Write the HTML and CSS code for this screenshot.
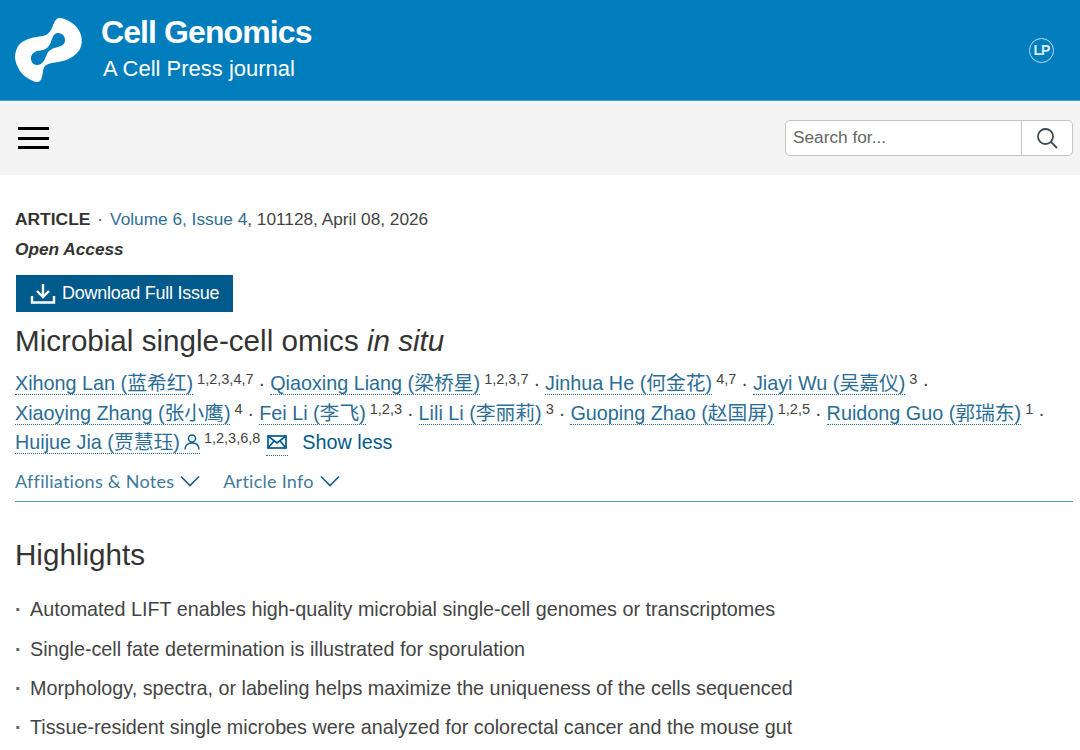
FILE: index.html
```html
<!DOCTYPE html>
<html lang="en">
<head>
<meta charset="utf-8">
<title>Microbial single-cell omics in situ</title>
<link rel="stylesheet" href="styles.css">
</head>
<body>
<header class="brand">
  <svg class="logo" viewBox="0 0 76 76" width="76" height="76" aria-hidden="true">
    <path fill="#fff" fill-rule="evenodd" d="M50 6C58 7 68 13 71 23C73 31 71 38 66 42C60 48 50 50 42 51C36 52 34 54 33 59C32.500 63 32 67 30 69C28 71 25 70 21 68C12 64 6 55 5 46C5 38 8 32 14 29C20 25 30 25 36 23C40 21 42 16 44 11C45 8 47 6 50 6ZM48 21C44 21 42 26 41 30C39 35 36 38 30 38.500C25 39 21 42 21 46C21 50 23 53 27 53C33 53 35 47 37 42C39 38 43 36 48 35C52 34 55 32 55 28C55 24 52 21 48 21Z"/>
  </svg>
  <div class="brand-text">
    <div class="brand-name">Cell Genomics</div>
    <div class="brand-sub">A Cell Press journal</div>
  </div>
  <div class="avatar">LP</div>
</header>
<nav class="toolbar">
  <button class="burger" aria-label="Menu"><span></span><span></span><span></span></button>
  <form class="search">
    <span class="search-input">Search for...</span>
    <span class="search-btn">
      <svg viewBox="0 0 24 24" width="24" height="24" fill="none" stroke="#3f4a52" stroke-width="1.800" aria-hidden="true"><circle cx="10.500" cy="10.500" r="7.500"/><path d="M16 16l6 6"/></svg>
    </span>
  </form>
</nav>
<main class="content">
  <div class="meta"><b class="kind">ARTICLE</b><span class="sep">·</span><a class="plain">Volume 6, Issue 4</a>, 101128, April 08, 2026</div>
  <div class="oa">Open Access</div>
  <a class="download">
    <svg viewBox="0 0 26 22" width="26" height="22" fill="none" stroke="#fff" stroke-width="2.400" aria-hidden="true"><path d="M13 1v12M7 8l6 6 6-6"/><path d="M2 13v6.500h22V13"/></svg>
    <span>Download Full Issue</span>
  </a>
  <h1>Microbial single-cell omics <i>in situ</i></h1>
  <div class="authors">
    <a>Xihong Lan (蓝希红)</a><sup>1,2,3,4,7</sup><span class="dot">·</span><a>Qiaoxing Liang (梁桥星)</a><sup>1,2,3,7</sup><span class="dot">·</span><a>Jinhua He (何金花)</a><sup>4,7</sup><span class="dot">·</span><a>Jiayi Wu (吴嘉仪)</a><sup>3</sup><span class="dot">·</span><br>
    <a>Xiaoying Zhang (张小鹰)</a><sup>4</sup><span class="dot">·</span><a>Fei Li (李飞)</a><sup>1,2,3</sup><span class="dot">·</span><a>Lili Li (李丽莉)</a><sup>3</sup><span class="dot">·</span><a>Guoping Zhao (赵国屏)</a><sup>1,2,5</sup><span class="dot">·</span><a>Ruidong Guo (郭瑞东)</a><sup>1</sup><span class="dot">·</span><br>
    <a class="corr">Huijue Jia (贾慧珏)<svg viewBox="0 0 16 16" width="16" height="16" fill="none" stroke="#005a8c" stroke-width="1.400" aria-hidden="true"><circle cx="8" cy="4.500" r="3.500"/><path d="M1 15.500c0-4.500 3-6.500 7-6.500s7 2 7 6.500"/></svg></a><sup>1,2,3,6,8</sup><a class="mail"><svg viewBox="0 0 20 14" width="20" height="14" fill="none" stroke="#005a8c" stroke-width="1.700" aria-hidden="true"><rect x="1" y="1" width="18" height="12"/><path d="M1 1l9 7 9-7M1 13l6-7M19 13l-6-7"/></svg></a><span class="less">Show less</span>
  </div>
  <div class="tabs">
    <span class="tab">Affiliations &amp; Notes<svg viewBox="0 0 20 12" width="20" height="12" fill="none" stroke="#1d5e86" stroke-width="1.700" aria-hidden="true"><path d="M1 1.500l9 9 9-9"/></svg></span>
    <span class="tab">Article Info<svg viewBox="0 0 20 12" width="20" height="12" fill="none" stroke="#1d5e86" stroke-width="1.700" aria-hidden="true"><path d="M1 1.500l9 9 9-9"/></svg></span>
  </div>
  <h2>Highlights</h2>
  <ul class="highlights">
    <li>Automated LIFT enables high-quality microbial single-cell genomes or transcriptomes</li>
    <li>Single-cell fate determination is illustrated for sporulation</li>
    <li>Morphology, spectra, or labeling helps maximize the uniqueness of the cells sequenced</li>
    <li>Tissue-resident single microbes were analyzed for colorectal cancer and the mouse gut</li>
  </ul>
</main>
</body>
</html>
```
FILE: styles.css
```css
* { box-sizing: border-box; }
html, body { margin: 0; padding: 0; height: 750px; overflow: hidden; }
body { font-family: "Liberation Sans", "Noto Sans CJK SC", sans-serif; color: #333; background: #fff; }
.brand { height: 101px; background: #007dbc; border-bottom: 1px solid #3f9fd0; display: flex; align-items: flex-start; padding: 12px 26px 0 10px; color: #fff; }
.logo { flex: none; margin-right: 15px; }
.brand-text { flex: 1; padding-top: 4px; }
.brand-name { font-size: 32px; font-weight: 700; line-height: 32px; letter-spacing: -.9px; }
.brand-sub { font-size: 22px; line-height: 26px; margin: 8px 0 0 2px; }
.avatar { width: 25px; height: 25px; margin-top: 26px; border: 1.500px solid #b9dcef; border-radius: 50%; font-size: 14px; font-weight: 700; line-height: 22px; text-align: center; letter-spacing: -1px; color: #d8edf8; }
.toolbar { height: 74px; background: #f4f4f4; display: flex; align-items: center; justify-content: space-between; padding: 0 7px 0 18px; }
.burger { width: 31px; height: 22px; padding: 0; background: none; border: 0; display: flex; flex-direction: column; justify-content: space-between; }
.burger span { height: 3px; width: 100%; background: #000; }
.search { width: 288px; height: 36px; display: flex; background: #fff; border: 1px solid #c4c4c4; border-radius: 5px; }
.search-input { flex: 1; padding-left: 7px; font-size: 17.250px; line-height: 33px; color: #666; }
.search-btn { width: 51px; border-left: 1px solid #c4c4c4; display: flex; align-items: center; justify-content: center; }
.content { padding: 33px 7px 0 15px; }
.meta { font-size: 17.250px; line-height: 22px; color: #444; }
.kind { font-weight: 700; font-size: 17.400px; color: #333; }
.sep { margin: 0 7px; }
.plain { color: #2f6f96; }
.oa { font-size: 17.250px; font-weight: 700; font-style: italic; line-height: 22px; margin-top: 8px; color: #333; }
.download { display: inline-flex; align-items: center; gap: 6px; width: 217px; height: 37px; margin: 15px 0 0 1px; padding-left: 14px; background: #005a8c; color: #fff; font-size: 18px; vertical-align: top; letter-spacing: -.25px; }
h1 { margin: 10px 0 0; font-size: 29.600px; font-weight: 400; line-height: 37px; color: #333; }
.authors { margin-top: 10px; font-size: 19.800px; line-height: 29.700px; color: #005a8c; white-space: nowrap; }
.authors a { color: #2b6d96; border-bottom: 1px dotted #2b6d96; }
.authors sup { font-size: 14.500px; line-height: 0; margin-left: 4px; color: #444; vertical-align: 6px; }
.dot { margin: 0 5px; color: #444; }
.corr svg { margin-left: 4px; vertical-align: -1px; }
.authors .mail { margin-left: 6px; padding: 0 1px 2px; }
.less { margin-left: 14px; color: #005a8c; }
.tabs { display: flex; gap: 23px; height: 37px; margin-top: 7px; border-bottom: 1px solid #4a9fd0; padding-top: 4px; }
.tab { font-family: "Lato", sans-serif; font-size: 18px; line-height: 24px; color: #3f7a9c; letter-spacing: .25px; display: flex; align-items: center; gap: 6px; height: 24px; }
h2 { margin: 34px 0 0; font-size: 29.600px; font-weight: 400; line-height: 37px; color: #333; }
.highlights { list-style: none; margin: 17px 0 0; padding: 0; }
.highlights li { position: relative; padding-left: 15px; font-size: 19.750px; line-height: 39.400px; color: #444; }
.highlights li::before { content: "·"; position: absolute; left: 0; color: #666; font-weight: 700; }
```
